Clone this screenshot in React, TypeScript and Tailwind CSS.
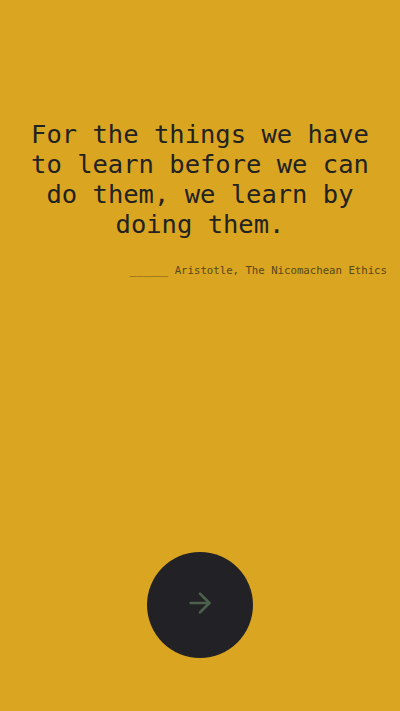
import { ArrowRight } from "lucide-react"

export default function App() {
  return (
    <div className="flex h-[711px] w-full flex-col bg-[#daa520] font-['DejaVu_Sans_Mono',monospace]">
      {/* Quote */}
      <h1 className="mt-[119px] px-4 text-center text-[25.5px] leading-[30px] font-normal text-[#222222]">
        For the things we have to learn before we can do them, we learn by doing them.
      </h1>
      <p className="mt-[24px] pr-[13px] text-right text-[10.7px] leading-4 text-[#574719]">
        ______ Aristotle, The Nicomachean Ethics
      </p>

      <div className="flex-1" />

      {/* Next */}
      <div className="flex justify-center pb-[53px]">
        <button className="flex h-[106px] w-[106px] items-center justify-center rounded-full bg-[#222226]">
          <ArrowRight className="h-8 w-8 -translate-y-[2px] text-[#4c624c]" strokeWidth={2} />
        </button>
      </div>
    </div>
  )
}
